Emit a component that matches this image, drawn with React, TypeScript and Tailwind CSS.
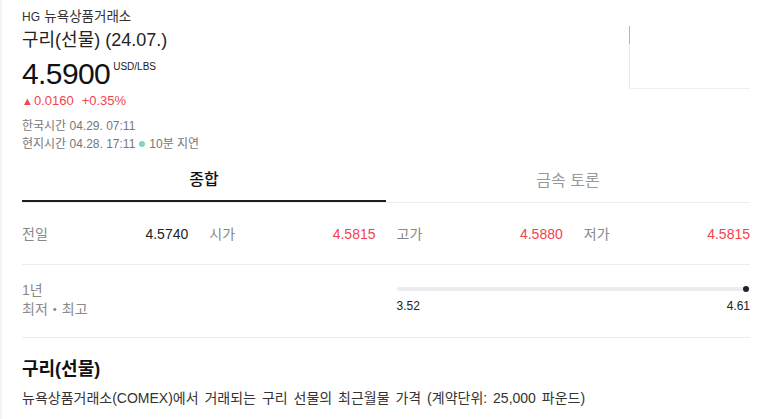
import React from 'react';

const stats = [
  { label: '전일', value: '4.5740', up: false },
  { label: '시가', value: '4.5815', up: true },
  { label: '고가', value: '4.5880', up: true },
  { label: '저가', value: '4.5815', up: true },
];

const MiniChart: React.FC = () => (
  <svg width="121" height="64" viewBox="0 0 121 64" className="mt-[16px] shrink-0">
    <rect x="0" y="0" width="1" height="63" fill="#fde3e3" />
    <rect x="0" y="0" width="1" height="18" fill="#f39a9a" />
    <rect x="0" y="62" width="121" height="1" fill="#f7eded" />
  </svg>
);

export default function App() {
  return (
    <div
      className="min-h-screen bg-white border-l-2 border-[#f3f3f3] pl-[20px] pr-[11px] text-[#333]"
      style={{ fontFamily: '"Liberation Sans", "Noto Sans CJK KR", sans-serif' }}
    >
      {/* header */}
      <div className="flex justify-between pt-[10px]">
        <div>
          <div className="text-[12px] leading-[14px] text-[#333] [word-spacing:1px]">
            HG <span className="text-[13.5px]">뉴욕상품거래소</span>
          </div>
          <h1 className="mt-[4px] text-[18px] leading-[24px] text-[#222]">구리(선물) (24.07.)</h1>
          <div className="mt-[4px] flex items-start">
            <span className="text-[30px] leading-[36px] tracking-[-0.6px] text-[#111]">4.5900</span>
            <span className="ml-[3px] mt-[5px] text-[10px] leading-[12px] text-[#222]">USD/LBS</span>
          </div>
          <div className="flex items-center text-[13px] leading-[18px] text-[#f2434f]">
            <span className="text-[11px] mr-[1px] leading-[12px]">▲</span>
            <span>0.0160</span>
            <span className="ml-[8px]">+0.35%</span>
          </div>
          <div className="mt-[7px] text-[12px] leading-[18px] text-[#777]">
            <div>한국시간 04.29. 07:11</div>
            <div className="flex items-center">
              <span>현지시간 04.28. 17:11</span>
              <span className="mx-[4px] inline-block w-[6px] h-[6px] rounded-full bg-[#7dd8c0]" />
              <span>10분 지연</span>
            </div>
          </div>
        </div>
        <MiniChart />
      </div>

      {/* tabs */}
      <div className="mt-[12px] flex border-b border-[#ececec]">
        <button className="flex-1 h-[37px] border-b-2 border-[#1e1e1e] -mb-px text-[16px] font-medium text-[#111] pb-[6px]">
          종합
        </button>
        <button className="flex-1 h-[37px] text-[16px] text-[#999] pb-[6px]">금속 토론</button>
      </div>

      {/* stats */}
      <div className="grid grid-cols-4 gap-x-[21px] h-[62px] items-center border-b border-[#ececec] pt-[2px] text-[14px]">
        {stats.map((s) => (
          <div key={s.label} className="flex justify-between">
            <span className="text-[#888]">{s.label}</span>
            <span className={s.up ? 'text-[#f2434f]' : 'text-[#222]'}>{s.value}</span>
          </div>
        ))}
      </div>

      {/* 1 year range */}
      <div className="grid grid-cols-4 gap-x-[21px] h-[73px] border-b border-[#ececec] pt-[16px]">
        <div className="col-span-2 text-[14px] leading-[19px] text-[#888]">
          <div>1년</div>
          <div>최저・최고</div>
        </div>
        <div className="col-span-2 pt-[6px]">
          <div className="relative h-[4px] rounded-full bg-[#ebebf0]">
            <span className="absolute right-[1px] top-[-1px] w-[6px] h-[6px] rounded-full bg-[#222]" />
          </div>
          <div className="mt-[8px] flex justify-between text-[12px] leading-[14px] text-[#222]">
            <span>3.52</span>
            <span>4.61</span>
          </div>
        </div>
      </div>

      {/* description */}
      <div className="pt-[20px]">
        <h2 className="text-[18px] leading-[22px] font-bold text-[#111]">구리(선물)</h2>
        <p className="mt-[8px] text-[14px] leading-[20px] text-[#333] [word-spacing:2px]">
          뉴욕상품거래소(COMEX)에서 거래되는 구리 선물의 최근월물 가격 (계약단위: 25,000 파운드)
        </p>
      </div>
    </div>
  );
}
